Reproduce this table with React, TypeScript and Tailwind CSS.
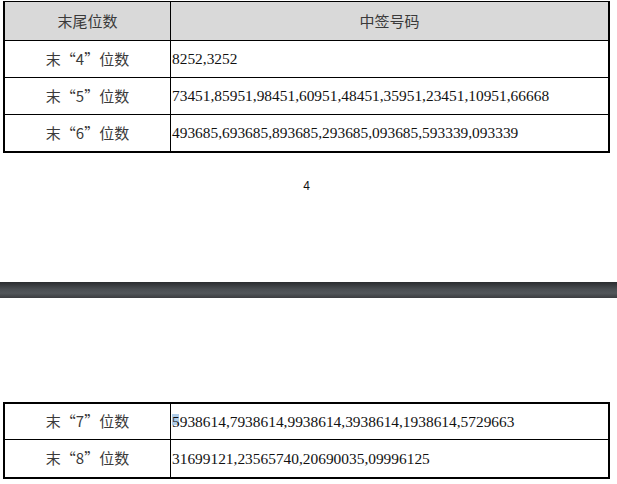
import React from "react";

const cjk = "font-['Noto_Sans_CJK_SC','Noto_Sans',sans-serif]";
const serif = "font-['Liberation_Serif','Times_New_Roman',serif]";

function Row({ label, value, h, last }: { label: string; value: React.ReactNode; h: string; last?: boolean }) {
  return (
    <div className={`flex ${h} ${last ? "" : "border-b border-black"}`}>
      <div className={`w-[166px] shrink-0 border-r border-black flex items-center justify-center text-[15px] text-[#3a3a3a] ${cjk}`}>
        {label}
      </div>
      <div className={`flex-1 flex items-center pl-[1px] text-[15.4px] text-[#111] ${serif}`}>{value}</div>
    </div>
  );
}

export default function App() {
  return (
    <div className="w-[617px] h-[484px] bg-white overflow-hidden flex flex-col">
      <div className="ml-[3px] mt-[1px] w-[607px] border-l-2 border-r-2 border-t border-b-2 border-black">
        <div className="flex h-[39px] bg-[#d9d9d9] border-b border-black">
          <div className={`w-[166px] shrink-0 border-r border-black flex items-center justify-center text-[15px] text-[#3a3a3a] ${cjk}`}>
            末尾位数
          </div>
          <div className={`flex-1 flex items-center justify-center text-[15px] text-[#3a3a3a] ${cjk}`}>中签号码</div>
        </div>
        <Row h="h-[37px]" label="末“4”位数" value="8252,3252" />
        <Row h="h-[37px]" label="末“5”位数" value="73451,85951,98451,60951,48451,35951,23451,10951,66668" />
        <Row h="h-[36px]" label="末“6”位数" value="493685,693685,893685,293685,093685,593339,093339" last />
      </div>

      <div className="ml-[3px] w-[607px] mt-[25px] h-[16px] flex items-center justify-center text-[12px] text-[#111] font-['Liberation_Sans',Arial,sans-serif]">
        4
      </div>

      <div className="mt-[88px] h-[16px] w-full bg-[linear-gradient(to_bottom,#2a2c2f,#4a4e52_45%,#52565a_70%,#3b3d40)]" />

      <div className="ml-[3px] mt-[104px] w-[607px] border-2 border-black">
        <Row
          h="h-[36px]"
          label="末“7”位数"
          value={
            <span>
              <span className="relative">
                <span className="absolute left-0 top-[1px] w-[7px] h-[11px] bg-[#8fb8e0] opacity-70" />
                <span className="relative">5</span>
              </span>
              938614,7938614,9938614,3938614,1938614,5729663
            </span>
          }
        />
        <Row h="h-[37px]" label="末“8”位数" value="31699121,23565740,20690035,09996125" last />
      </div>
    </div>
  );
}
